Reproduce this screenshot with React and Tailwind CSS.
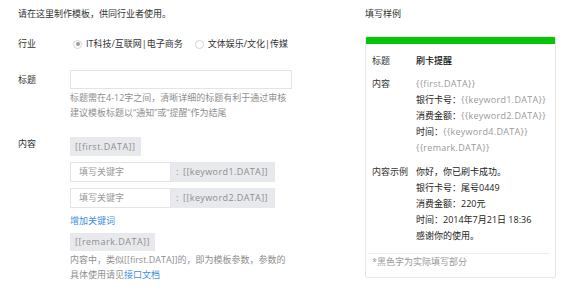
import React from "react";

const Radio = ({ checked, label }) => (
  <label className="flex items-center">
    <span className="w-[9px] h-[9px] rounded-full border border-[#d4d4d4] bg-white flex items-center justify-center">
      {checked && <span className="w-[4px] h-[4px] rounded-full bg-[#9a9a9a]" />}
    </span>
    <span className="ml-[4px]">{label}</span>
  </label>
);

const KeywordRow = ({ name }) => (
  <div className="flex h-[20px] mt-[6px] w-[205px]">
    <div className="w-[101px] border border-[#e4e4e4] bg-white pl-[8px] flex items-center text-[#9a9a9a]">
      填写关键字
    </div>
    <div className="flex-1 bg-[#e8e9ec] flex items-center pl-[5px] text-[#8f8f8f]">
      :&nbsp;&nbsp;<span className="tracking-[0.4px]">[[{name}.DATA]]</span>
    </div>
  </div>
);

const SampleLine = ({ label, value }) => (
  <div className="whitespace-nowrap">
    {label && <span className="text-[#222]">{label}：</span>}
    <span className="text-[#9a9a9a] tracking-[0.3px]">{value}</span>
  </div>
);

export default function App() {
  return (
    <div
      className="w-[565px] h-[301px] bg-white flex text-[9px] text-[#333] overflow-hidden"
      style={{ fontFamily: '"Open Sans", "Noto Sans CJK SC", sans-serif' }}
    >
      {/* Left: form */}
      <div className="pl-[18px] pt-[8px] w-[365px] shrink-0">
        <div className="leading-[12px]">请在这里制作模板，供同行业者使用。</div>

        <div className="flex leading-[12px] mt-[18px]">
          <div className="w-[55px]">行业</div>
          <div className="flex gap-[12px]">
            <Radio checked label="IT科技/互联网|电子商务" />
            <Radio label="文体娱乐/文化|传媒" />
          </div>
        </div>

        <div className="flex mt-[20px]">
          <div className="w-[52px] leading-[19px]">标题</div>
          <div>
            <div className="w-[222px] h-[19px] border border-[#e4e4e4] bg-white" />
            <div className="mt-[1px] leading-[15px] text-[#8f8f8f]">
              <div>标题需在4-12字之间，清晰详细的标题有利于通过审核</div>
              <div>建议模板标题以“通知”或“提醒”作为结尾</div>
            </div>
          </div>
        </div>

        <div className="flex mt-[17px]">
          <div className="w-[52px] leading-[14px]">内容</div>
          <div>
            <div className="inline-flex items-center h-[19px] px-[5px] bg-[#e8e9ec] text-[#8f8f8f] tracking-[0.5px]">
              [[first.DATA]]
            </div>
            <KeywordRow name="keyword1" />
            <KeywordRow name="keyword2" />
            <div className="mt-[7px] leading-[12px] text-[#3f8fe0]">增加关键词</div>
            <div className="mt-[6px] inline-flex items-center h-[18px] px-[5px] bg-[#e8e9ec] text-[#8f8f8f] tracking-[0.5px]">
              [[remark.DATA]]
            </div>
            <div className="mt-[1px] leading-[15px] text-[#8f8f8f]">
              <div>内容中，类似[[first.DATA]]的，即为模板参数，参数的</div>
              <div>
                具体使用请见<span className="text-[#3f8fe0]">接口文档</span>
              </div>
            </div>
          </div>
        </div>
      </div>

      {/* Right: sample */}
      <div className="pt-[8px] w-[191px] shrink-0">
        <div className="leading-[12px]">填写样例</div>
        <div className="mt-[16px] border border-[#e6e6e6] rounded-[2px] overflow-hidden">
          <div className="h-[7px] bg-[#07c60a]" />
          <div className="px-[6px] pt-[9px] pb-[9px] leading-[16px]">
            <div className="flex">
              <div className="w-[44px]">标题</div>
              <div className="text-[#111] font-medium">刷卡提醒</div>
            </div>
            <div className="flex mt-[7px]">
              <div className="w-[44px]">内容</div>
              <div>
                <SampleLine value="{{first.DATA}}" />
                <SampleLine label="银行卡号" value="{{keyword1.DATA}}" />
                <SampleLine label="消费金额" value="{{keyword2.DATA}}" />
                <SampleLine label="时间" value="{{keyword4.DATA}}" />
                <SampleLine value="{{remark.DATA}}" />
              </div>
            </div>
            <div className="flex mt-[8px] text-[#222]">
              <div className="w-[44px] text-[#333]">内容示例</div>
              <div className="whitespace-nowrap">
                <div>你好，你已刷卡成功。</div>
                <div>银行卡号：尾号0449</div>
                <div>消费金额：220元</div>
                <div>时间：2014年7月21日 18:36</div>
                <div>感谢你的使用。</div>
              </div>
            </div>
            <div className="mt-[9px] ml-[-4px] border-t border-[#ececec]" />
            <div className="mt-[2px] leading-[12px] text-[#9a9a9a]">*黑色字为实际填写部分</div>
          </div>
        </div>
      </div>
    </div>
  );
}
